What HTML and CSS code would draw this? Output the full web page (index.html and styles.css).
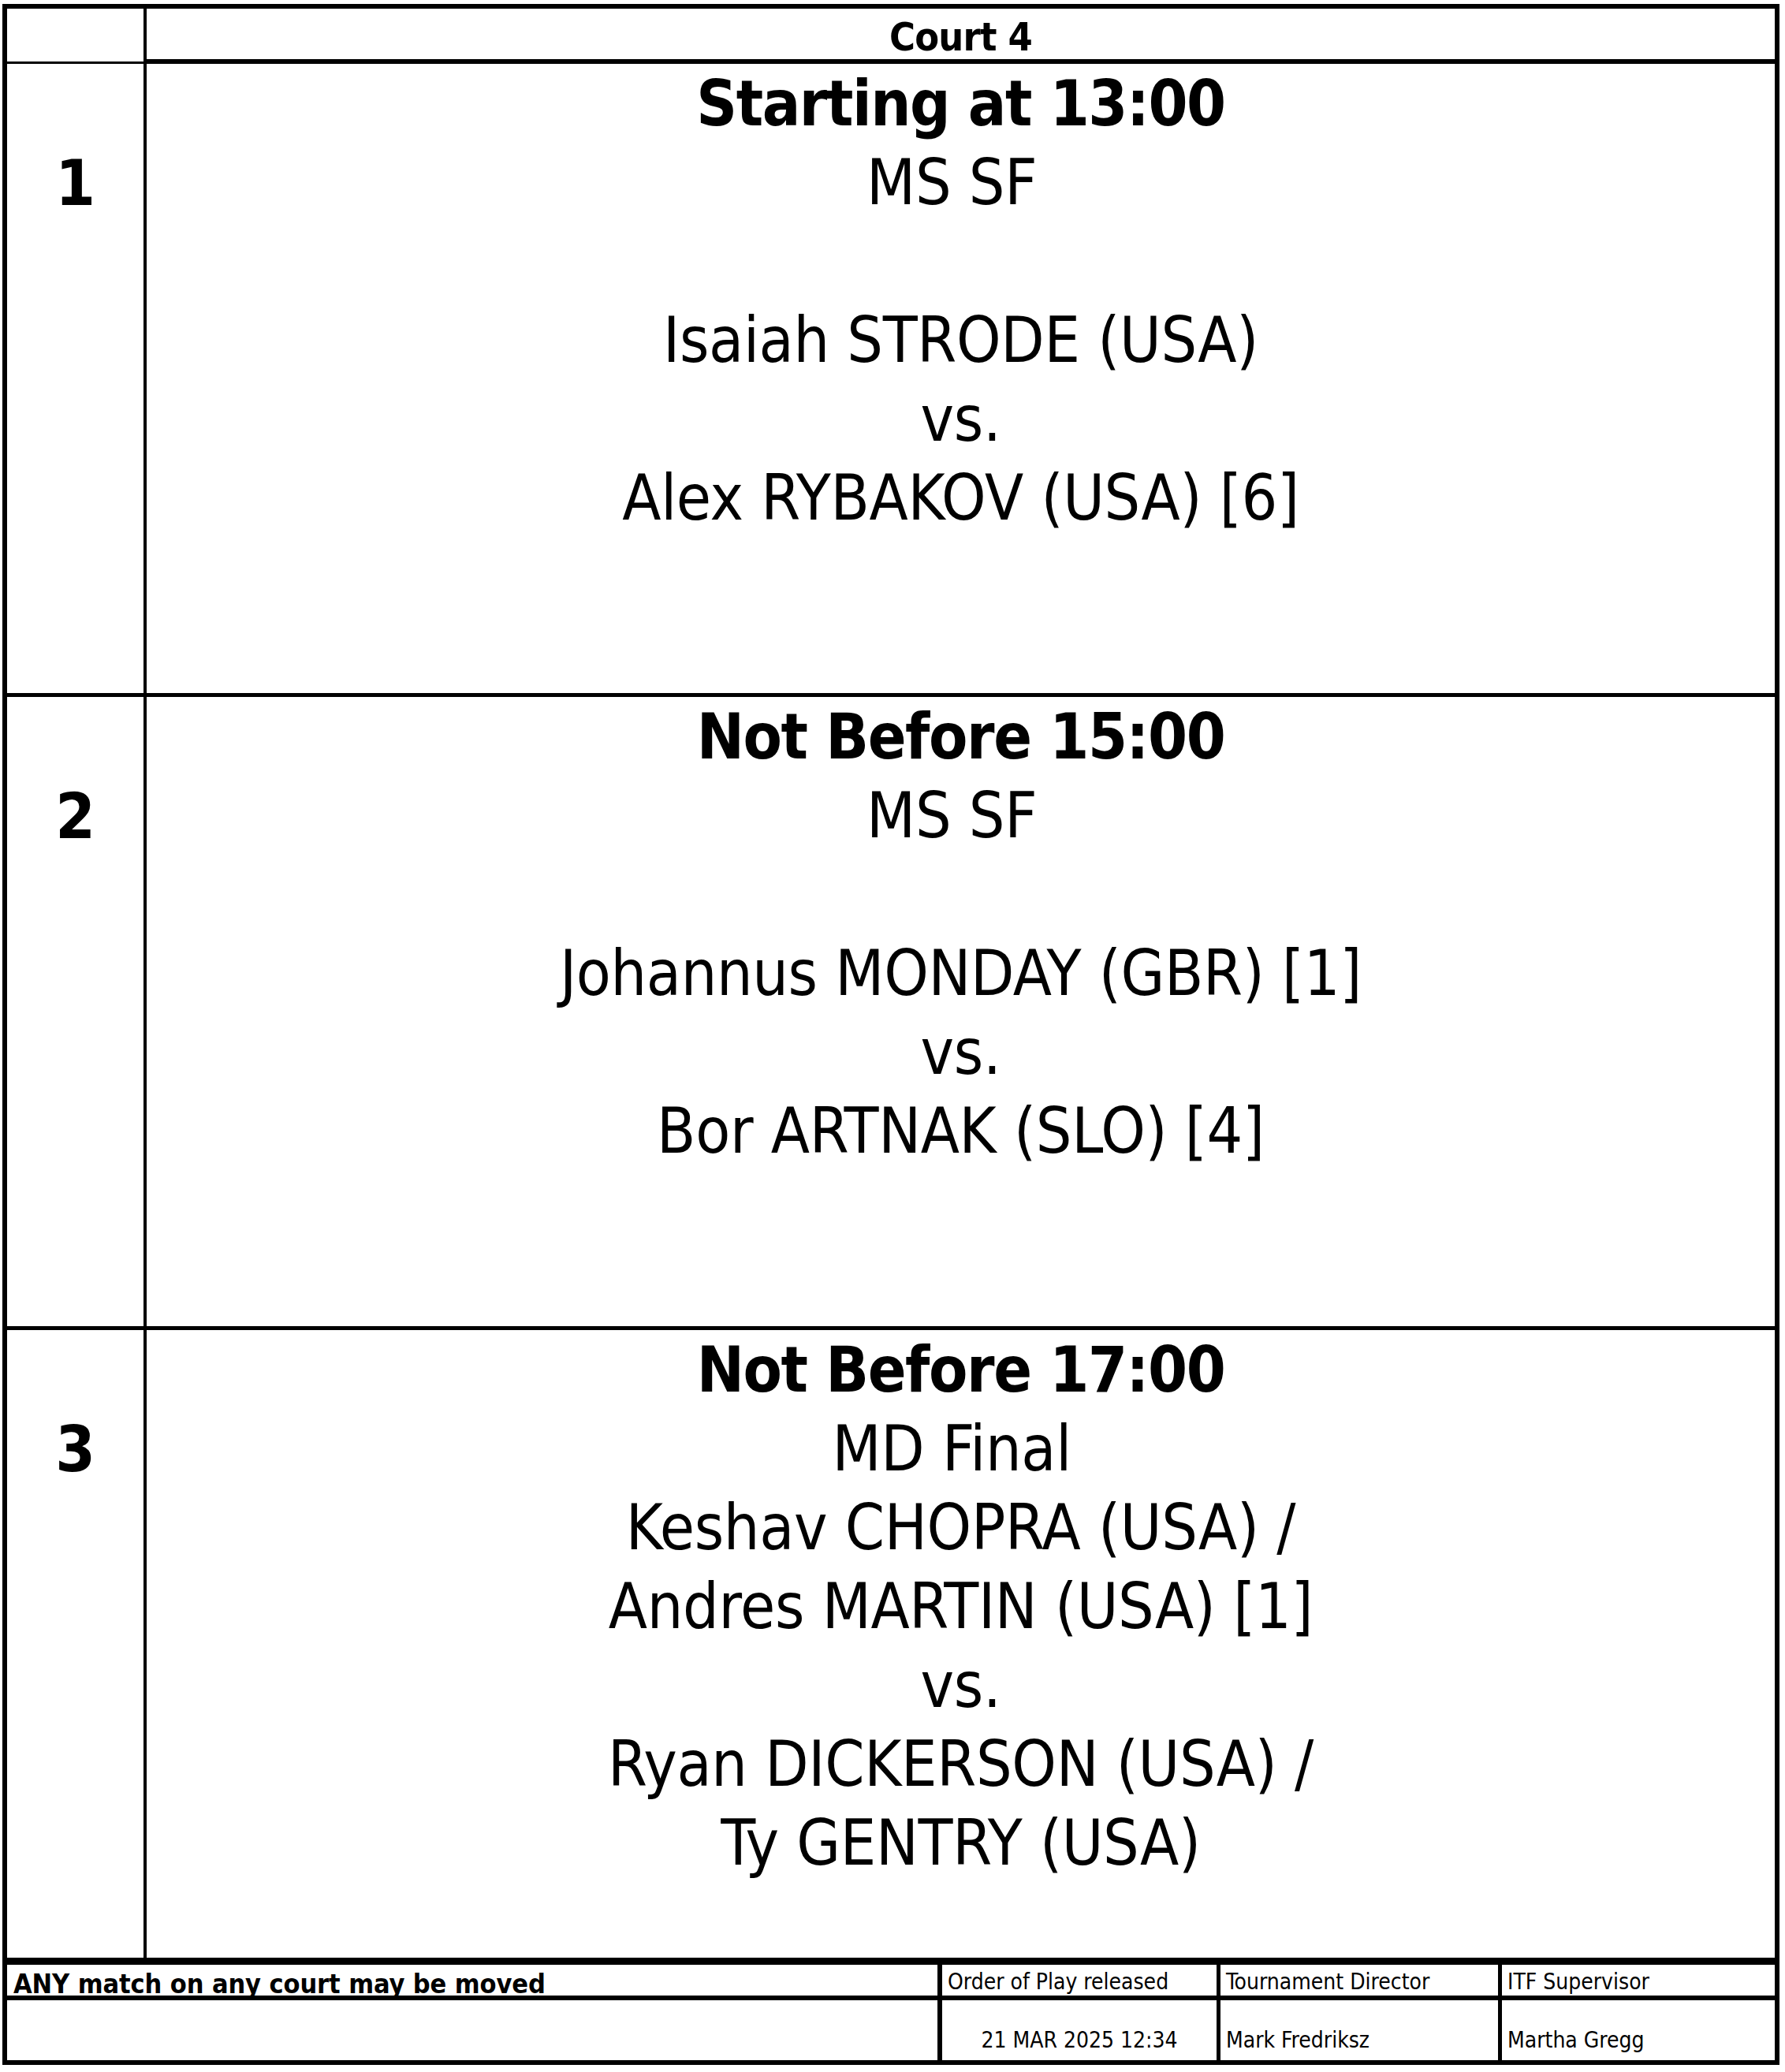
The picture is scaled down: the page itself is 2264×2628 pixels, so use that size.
FILE: index.html
```html
<!DOCTYPE html>
<html lang="en">
<head>
<meta charset="utf-8">
<title>Court 4 - Order of Play</title>
<link rel="stylesheet" href="styles.css">
</head>
<body>
<div class="sheet">
  <div class="row head">
    <div class="num-cell head-num"></div>
    <div class="main-cell head-title">Court 4</div>
  </div>

  <div class="row match">
    <div class="num-cell">1</div>
    <div class="main-cell">
      <p class="when">Starting at 13:00</p>
      <p>MS SF&nbsp;</p>
      <p>&nbsp;</p>
      <p>Isaiah STRODE (USA)</p>
      <p>vs.</p>
      <p>Alex RYBAKOV (USA) [6]</p>
    </div>
  </div>

  <div class="row match">
    <div class="num-cell">2</div>
    <div class="main-cell">
      <p class="when">Not Before 15:00</p>
      <p>MS SF&nbsp;</p>
      <p>&nbsp;</p>
      <p>Johannus MONDAY (GBR) [1]</p>
      <p>vs.</p>
      <p>Bor ARTNAK (SLO) [4]</p>
    </div>
  </div>

  <div class="row match last">
    <div class="num-cell">3</div>
    <div class="main-cell">
      <p class="when">Not Before 17:00</p>
      <p>MD Final&nbsp;</p>
      <p>Keshav CHOPRA (USA) /</p>
      <p>Andres MARTIN (USA) [1]</p>
      <p>vs.</p>
      <p>Ryan DICKERSON (USA) /</p>
      <p>Ty GENTRY (USA)</p>
    </div>
  </div>

  <div class="foot">
    <div class="fcell label c1 notice">ANY match on any court may be moved</div>
    <div class="fcell label c2">Order of Play released</div>
    <div class="fcell label c3">Tournament Director</div>
    <div class="fcell label c4">ITF Supervisor</div>
    <div class="fcell value c1"></div>
    <div class="fcell value c2 center">21 MAR 2025 12:34</div>
    <div class="fcell value c3">Mark Fredriksz</div>
    <div class="fcell value c4">Martha Gregg</div>
  </div>
</div>
</body>
</html>
```

FILE: styles.css
```css
html, body {
  margin: 0;
  padding: 0;
  background: #fff;
}

body {
  color: #000;
  font-family: "DejaVu Sans Condensed", "DejaVu Sans", sans-serif;
  font-stretch: semi-condensed;
}

.sheet {
  box-sizing: border-box;
  width: 2254px;
  margin: 5px 0 0 3px;
  border: 6px solid #000;
}

.row {
  display: grid;
  grid-template-columns: 177px 1fr;
}

.num-cell {
  box-sizing: border-box;
  border-right: 4px solid #000;
  text-align: center;
  font-weight: bold;
  font-size: 81px;
  line-height: 100px;
  padding-top: 101px;
}

.main-cell {
  box-sizing: border-box;
  text-align: center;
  font-size: 80px;
  line-height: 100px;
  letter-spacing: -0.3px;
  padding-top: 1px;
}

.main-cell p {
  margin: 0;
  white-space: nowrap;
}

.main-cell .when {
  font-weight: bold;
  letter-spacing: -1.4px;
}

/* header row */
.head {
  height: 70px;
}

.head .head-num {
  border-bottom: 3px solid #000;
  padding-top: 0;
}

.head .head-title {
  border-bottom: 6px solid #000;
  font-weight: bold;
  font-size: 50px;
  line-height: 56px;
  padding-top: 8px;
  letter-spacing: -0.8px;
}

/* match rows */
.match {
  height: 803px;
  border-bottom: 5px solid #000;
  box-sizing: border-box;
}

.match.last {
  height: 805px;
  border-bottom-width: 9px;
}

/* footer */
.foot {
  display: grid;
  grid-template-columns: 1186px 353px 357px 1fr;
  grid-template-rows: 45px 76px;
}

.fcell {
  box-sizing: border-box;
  display: flex;
  align-items: flex-end;
  white-space: nowrap;
  font-size: 28px;
  line-height: 28px;
  padding-left: 7px;
}

.fcell.c1 { border-right: 6px solid #000; }
.fcell.c2 { border-right: 5px solid #000; }
.fcell.c3 { border-right: 5px solid #000; }

.fcell.label {
  border-bottom: 6px solid #000;
  padding-bottom: 3px;
}

.fcell.notice {
  font-weight: bold;
  font-size: 34px;
  line-height: 30px;
  padding-bottom: 0;
  padding-left: 8px;
  letter-spacing: -0.1px;
}

.fcell.value {
  padding-bottom: 11px;
}

.fcell.center {
  justify-content: center;
  padding-left: 0;
}
```
